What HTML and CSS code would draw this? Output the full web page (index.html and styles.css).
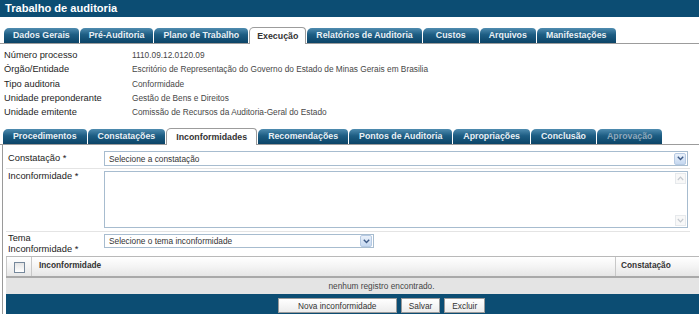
FILE: index.html
```html
<!DOCTYPE html>
<html lang="pt-BR">
<head>
<meta charset="utf-8">
<title>Trabalho de auditoria</title>
<link rel="stylesheet" href="styles.css">
</head>
<body>
<div class="header">Trabalho de auditoria</div>

<ul class="tabs tabs-main">
  <li class="tab">Dados Gerais</li>
  <li class="tab">Pré-Auditoria</li>
  <li class="tab">Plano de Trabalho</li>
  <li class="tab active">Execução</li>
  <li class="tab">Relatórios de Auditoria</li>
  <li class="tab">Custos</li>
  <li class="tab">Arquivos</li>
  <li class="tab">Manifestações</li>
</ul>

<div class="info">
  <div class="info-label">Número processo</div><div class="info-value">1110.09.12.0120.09</div>
  <div class="info-label">Órgão/Entidade</div><div class="info-value">Escritório de Representação do Governo do Estado de Minas Gerais em Brasilia</div>
  <div class="info-label">Tipo auditoria</div><div class="info-value">Conformidade</div>
  <div class="info-label">Unidade preponderante</div><div class="info-value">Gestão de Bens e Direitos</div>
  <div class="info-label">Unidade emitente</div><div class="info-value">Comissão de Recursos da Auditoria-Geral do Estado</div>
</div>

<ul class="tabs tabs-sub">
  <li class="tab">Procedimentos</li>
  <li class="tab">Constatações</li>
  <li class="tab active">Inconformidades</li>
  <li class="tab">Recomendações</li>
  <li class="tab">Pontos de Auditoria</li>
  <li class="tab">Apropriações</li>
  <li class="tab">Conclusão</li>
  <li class="tab disabled">Aprovação</li>
</ul>

<div class="panel">
  <div class="form-row row-constatacao">
    <label class="form-label">Constatação *</label>
    <div class="select select-full">
      <span class="select-text">Selecione a constatação</span>
      <span class="select-btn"><svg width="7" height="5" viewBox="0 0 7 5"><polyline points="0.8,0.8 3.5,3.6 6.2,0.8" fill="none" stroke="#3d5a86" stroke-width="1.4"/></svg></span>
    </div>
  </div>
  <div class="form-row row-texto">
    <label class="form-label">Inconformidade *</label>
    <div class="textarea">
      <div class="scroll">
        <span class="scroll-btn"><svg width="7" height="5" viewBox="0 0 7 5"><polyline points="0.8,4 3.5,1.2 6.2,4" fill="none" stroke="#c4c9cf" stroke-width="1.2"/></svg></span>
        <span class="scroll-btn"><svg width="7" height="5" viewBox="0 0 7 5"><polyline points="0.8,1 3.5,3.8 6.2,1" fill="none" stroke="#c4c9cf" stroke-width="1.2"/></svg></span>
      </div>
    </div>
  </div>
  <div class="form-row row-tema">
    <label class="form-label">Tema Inconformidade *</label>
    <div class="select select-short">
      <span class="select-text">Selecione o tema inconformidade</span>
      <span class="select-btn"><svg width="7" height="5" viewBox="0 0 7 5"><polyline points="0.8,0.8 3.5,3.6 6.2,0.8" fill="none" stroke="#3d5a86" stroke-width="1.4"/></svg></span>
    </div>
  </div>

  <div class="grid">
    <div class="grid-head">
      <div class="col-check"><span class="checkbox"></span></div>
      <div class="col-main">Inconformidade</div>
      <div class="col-side">Constatação</div>
    </div>
    <div class="grid-empty">nenhum registro encontrado.</div>
    <div class="grid-foot">
      <button class="btn btn-wide">Nova inconformidade</button>
      <button class="btn">Salvar</button>
      <button class="btn">Excluir</button>
    </div>
  </div>
</div>
</body>
</html>
```
FILE: styles.css
```css
* { box-sizing: border-box; }
html, body { margin: 0; padding: 0; overflow: hidden; }
body {
  width: 699px;
  height: 314px;
  background: #fff;
  color: #333;
  font-family: "Liberation Sans", Arial, sans-serif;
}

.header {
  height: 17px;
  background: #0c4d73;
  color: #fff;
  font-size: 11.1px;
  font-weight: bold;
  line-height: 17px;
  padding-left: 5px;
}

/* tabs */
.tabs {
  display: flex;
  align-items: flex-end;
  list-style: none;
  margin: 0;
  height: 16px;
  border-bottom: 1px solid #9c9c9c;
}
.tabs-main { margin-top: 11px; padding-left: 4px; }
.tabs-sub { margin-top: 10px; padding-left: 3px; }

.tab {
  height: 15px;
  line-height: 15px;
  padding: 0 10px;
  min-width: 58px;
  margin-right: 1px;
  font-size: 8.8px;
  font-weight: bold;
  color: #e9f0f5;
  text-align: center;
  white-space: nowrap;
  background: linear-gradient(#4f8cb0, #1d5d83 45%, #0b4467);
  border-radius: 5px 4px 0 0;
}
.tabs-main .tab { padding: 0 9px; min-width: 56px; }
.tab.active {
  height: 17px;
  line-height: 16px;
  background: #fff;
  color: #333;
  border: 1px solid #9c9c9c;
  border-bottom: 0;
  margin-bottom: -1px;
}
.tabs-sub .tab.active { padding: 0 9px; }
.tabs-main .tab.active { padding: 0 7px; }
.tab.disabled { color: #8fa8bb; }

/* info block */
.info {
  display: grid;
  grid-template-columns: 128px 1fr;
  grid-auto-rows: 14.3px;
  margin-top: 4px;
  padding-left: 4px;
  align-items: center;
}
.info-label { font-size: 9.3px; color: #1e1e1e; white-space: nowrap; }
.info-value { font-size: 8.3px; color: #474747; white-space: nowrap; }

/* panel */
.panel {
  margin-left: 2px;
  border-left: 1px solid #9a9a9a;
  padding-left: 3px;
  width: 755px;
}

.form-row {
  display: grid;
  grid-template-columns: 98px 584px;
  width: 684px;
  border-bottom: 1px solid #e4e4e4;
}
.form-label {
  font-size: 9.3px;
  color: #222;
  padding: 0 12px 0 2px;
}
.row-constatacao { padding: 6px 0 2px; }
.row-constatacao .form-label { line-height: 15px; }
.row-texto { padding: 2px 0 3px; }
.row-texto .form-label { line-height: 11px; }
.row-tema { padding-top: 2px; height: 24px; border-bottom: 0; }
.row-tema .form-label { line-height: 10.5px; margin-top: -1px; }

.select {
  display: flex;
  align-items: center;
  justify-content: space-between;
  height: 15px;
  border: 1px solid #a7bccf;
  background: #fff;
  font-size: 8.3px;
  color: #333;
  padding-left: 4px;
}
.select-short { width: 270px; height: 14px; }
.select-btn {
  display: flex;
  align-items: center;
  justify-content: center;
  width: 12px;
  height: 12px;
  margin-right: 1px;
  border: 1px solid #b6cae3;
  border-radius: 2px;
  background: linear-gradient(#eaf1fa, #c5d8f0);
}

.textarea {
  display: flex;
  justify-content: flex-end;
  height: 57px;
  border: 1px solid #a7bccf;
  background: #fff;
}
.scroll {
  display: flex;
  flex-direction: column;
  justify-content: space-between;
  width: 12px;
  padding: 1px 1px 1px 0;
}
.scroll-btn {
  display: flex;
  align-items: center;
  justify-content: center;
  height: 11px;
  border: 1px solid #e6e9ec;
  background: #f8f8f8;
}

/* grid */
.grid { width: 751px; }
.grid-head {
  display: grid;
  grid-template-columns: 25px 584px 142px;
  height: 22px;
  border-top: 1px solid #b9b9b9;
  border-bottom: 2px solid #a9a9a9;
  background: linear-gradient(#fff, #f4f4f4 50%, #e6e6e6);
  font-size: 8.3px;
  font-weight: bold;
  color: #333;
}
.grid-head > div { padding-top: 3px; line-height: 11px; }
.col-check {
  display: flex;
  justify-content: center;
  padding-top: 5px !important;
  border-left: 1px solid #c8c8c8;
}
.col-main { border-left: 1px solid #c8c8c8; padding-left: 7px; }
.col-side { border-left: 1px solid #c8c8c8; padding-left: 5px; }
.checkbox {
  width: 11px;
  height: 11px;
  border: 1px solid #76889b;
  background: linear-gradient(#e4e4e4, #fff);
}
.grid-empty {
  display: flex;
  justify-content: center;
  height: 16px;
  line-height: 16px;
  background: #e4e4e4;
  font-size: 8.3px;
  color: #444;
}
.grid-foot {
  display: flex;
  justify-content: center;
  gap: 4px;
  height: 24px;
  padding-top: 4px;
  background: #0c4d73;
}
.btn {
  height: 15px;
  padding: 0 7px;
  margin: 0;
  font-family: "Liberation Sans", Arial, sans-serif;
  font-size: 8.3px;
  color: #333;
  background: linear-gradient(#fff, #ececec);
  border: 1px solid #9a9a9a;
  border-radius: 0;
}
.btn-wide { width: 119px; }
```
